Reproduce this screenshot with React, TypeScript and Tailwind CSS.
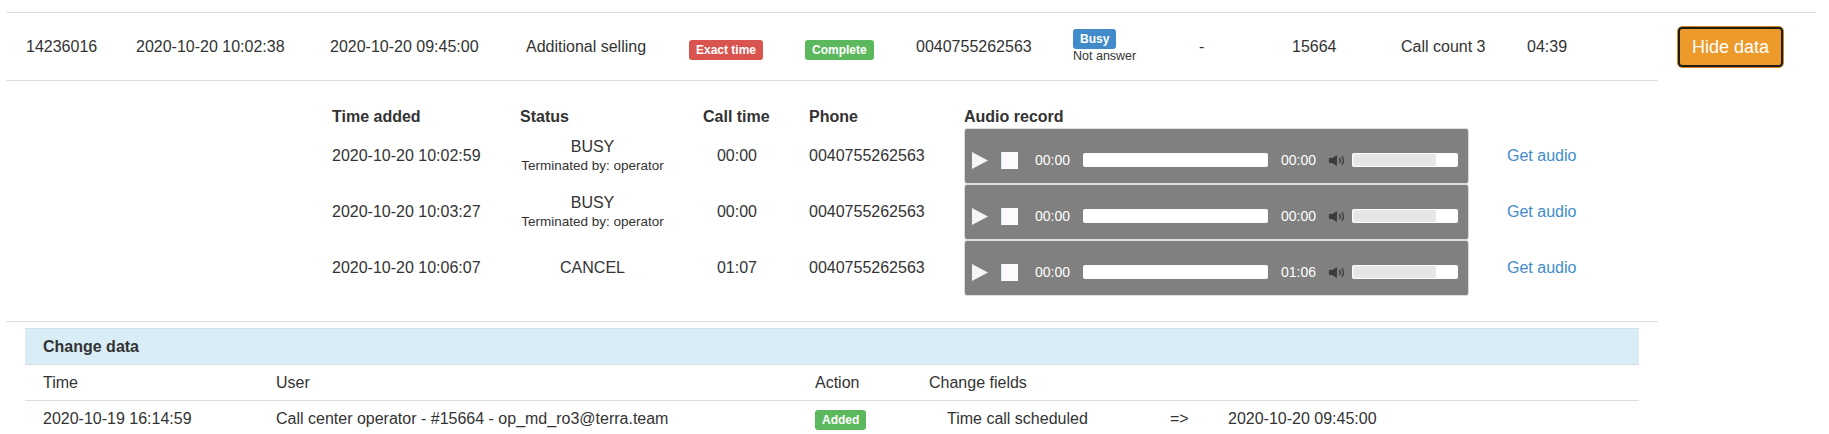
const badge =
  "inline-flex h-[20px] items-center rounded-[3px] px-[7px] text-[12px] font-bold leading-none text-white";

const calls = [
  { added: "2020-10-20 10:02:59", status: "BUSY", by: "operator", time: "00:00", total: "00:00" },
  { added: "2020-10-20 10:03:27", status: "BUSY", by: "operator", time: "00:00", total: "00:00" },
  { added: "2020-10-20 10:06:07", status: "CANCEL", by: "", time: "01:07", total: "01:06" },
];

function Speaker() {
  return (
    <svg width="18" height="11" viewBox="0 0 18 11">
      <rect x="0" y="3" width="3" height="5" fill="#3c3c3c" />
      <polygon points="3,3 8,0 8,11 3,8" fill="#3c3c3c" />
      <path d="M10.5 3 Q12.2 5.5 10.5 8" stroke="#3c3c3c" strokeWidth="1.4" fill="none" />
      <path d="M13 1.2 Q15.8 5.5 13 9.8" stroke="#3c3c3c" strokeWidth="1.4" fill="none" />
    </svg>
  );
}

function Player({ total }: { total: string }) {
  return (
    <div className="flex h-[56px] w-[505px] items-center rounded-[3px] border border-[#dcdcdc] bg-[#808080] pl-[7px] pt-[8px] text-[14px] text-white">
      <svg width="16" height="17" viewBox="0 0 16 17">
        <polygon points="0,0 16,8.5 0,17" fill="#f5f5f5" />
      </svg>
      <div className="ml-[13px] h-[17px] w-[17px] border-l border-[#dbe6f3] bg-[#fbfbfb]" />
      <span className="ml-[17px] w-[35px]">00:00</span>
      <div className="ml-[13px] h-[14px] w-[185px] rounded-[2px] bg-white" />
      <span className="ml-[13px] w-[35px]">{total}</span>
      <span className="ml-[13px] flex">
        <Speaker />
      </span>
      <div className="ml-[5px] h-[14px] w-[106px] rounded-[2px] bg-white p-[1px]">
        <div className="h-full w-[83px] rounded-l-[2px] bg-[#e6e6e6]" />
      </div>
    </div>
  );
}

export default function App() {
  return (
    <div className="h-screen overflow-hidden bg-white pt-[12px] font-['Liberation_Sans',Arial,sans-serif] text-[16px] text-[#333]">
      <div className="ml-[6px] flex w-[1810px] border-t border-[#ddd]">
        <div className="w-[1652px]">
          {/* main row */}
          <div className="flex h-[68px] items-center border-b border-[#ddd]">
            <div className="w-[130px] pl-[20px]">14236016</div>
            <div className="w-[194px]">2020-10-20 10:02:38</div>
            <div className="w-[196px]">2020-10-20 09:45:00</div>
            <div className="w-[163px]">Additional selling</div>
            <div className="w-[116px] pt-[4px]">
              <span className={`${badge} bg-[#d9534f]`}>Exact time</span>
            </div>
            <div className="w-[111px] pt-[4px]">
              <span className={`${badge} bg-[#5cb85c]`}>Complete</span>
            </div>
            <div className="w-[157px]">0040755262563</div>
            <div className="flex w-[126px] flex-col items-start">
              <span className={`${badge} bg-[#428bca]`}>Busy</span>
              <span className="text-[12.5px] leading-[15px]">Not answer</span>
            </div>
            <div className="w-[93px]">-</div>
            <div className="w-[109px]">15664</div>
            <div className="w-[126px]">Call count 3</div>
            <div className="w-[131px]">04:39</div>
          </div>

          {/* calls detail */}
          <div className="border-b border-[#ddd] pb-[25px] pl-[326px] pt-[25px]">
            <div className="flex h-[22px] items-center gap-[38px] font-bold">
              <div className="w-[150px]">Time added</div>
              <div className="w-[145px]">Status</div>
              <div className="w-[68px]">Call time</div>
              <div className="w-[117px]">Phone</div>
              <div className="w-[505px]">Audio record</div>
            </div>
            {calls.map((c) => (
              <div key={c.added} className="flex h-[56px] items-center gap-[38px]">
                <div className="w-[150px]">{c.added}</div>
                <div className="flex w-[145px] flex-col items-center">
                  <span className="leading-[20px]">{c.status}</span>
                  {c.by && (
                    <span className="text-[13.5px] leading-[18px]">Terminated by: {c.by}</span>
                  )}
                </div>
                <div className="w-[68px] text-center">{c.time}</div>
                <div className="w-[117px]">0040755262563</div>
                <Player total={c.total} />
                <a className="text-[#428bca]">Get audio</a>
              </div>
            ))}
          </div>

          {/* change data */}
          <div className="mx-[19px] pt-[6px]">
            <div className="flex h-[37px] items-center border-y border-b-[#ddd] border-t-[#d3dfe6] bg-[#d9edf7] pl-[18px] font-bold">
              Change data
            </div>
            <div className="flex h-[36px] items-center border-b border-[#ddd]">
              <div className="w-[233px] pl-[18px]">Time</div>
              <div className="w-[539px] pl-[18px]">User</div>
              <div className="w-[114px] pl-[18px]">Action</div>
              <div className="pl-[18px]">Change fields</div>
            </div>
            <div className="flex h-[36px] items-center">
              <div className="w-[233px] pl-[18px]">2020-10-19 16:14:59</div>
              <div className="w-[539px] pl-[18px]">Call center operator - #15664 - op_md_ro3@terra.team</div>
              <div className="w-[114px] pl-[18px]">
                <span className={`${badge} h-[19px] bg-[#5cb85c]`}>Added</span>
              </div>
              <div className="flex pl-[18px]">
                <div className="w-[223px] pl-[18px]">Time call scheduled</div>
                <div className="w-[58px] pl-[18px]">=&gt;</div>
                <div className="pl-[18px]">2020-10-20 09:45:00</div>
              </div>
            </div>
          </div>
        </div>

        <div className="w-[158px]">
          <div className="flex h-[68px] items-center pl-[19px]">
            <button className="rounded-[5px] border border-[#d58512] p-0">
              <span className="flex h-[40px] w-[105px] items-center justify-center rounded-[4px] border-2 border-[#1c1c1c] bg-[#ec9a29] text-[18px] text-white">
                Hide data
              </span>
            </button>
          </div>
        </div>
      </div>
    </div>
  );
}
